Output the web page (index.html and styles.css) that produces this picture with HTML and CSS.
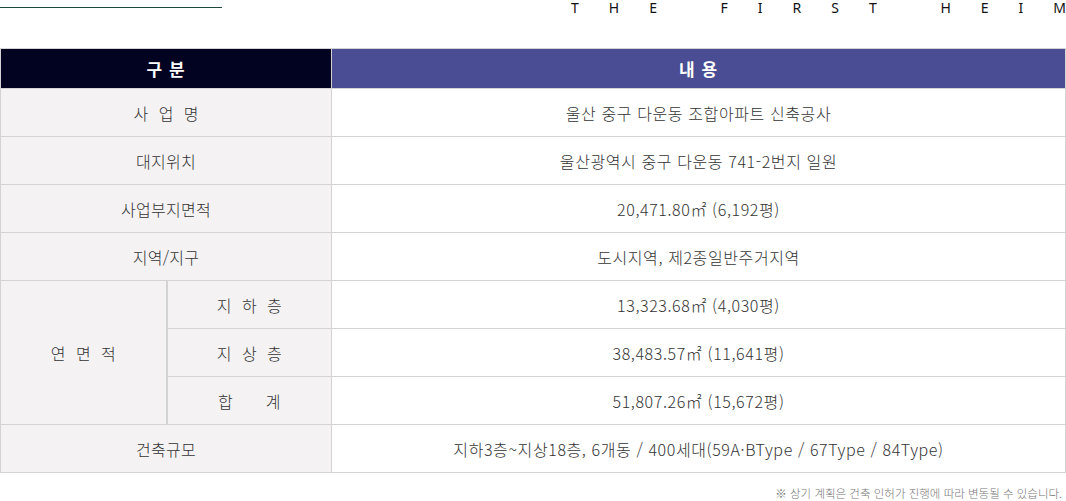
FILE: index.html
```html
<!DOCTYPE html>
<html lang="ko">
<head>
<meta charset="utf-8">
<title>The First Heim</title>
<link rel="stylesheet" href="styles.css">
</head>
<body>
<div class="top">
  <div class="rule"></div>
  <div class="brand">THE FIRST HEI<span class="last">M</span></div>
</div>
<table class="spec">
  <colgroup>
    <col class="c1"><col class="c2"><col class="c3">
  </colgroup>
  <thead>
    <tr>
      <th colspan="2" class="h-left">구 분</th>
      <th class="h-right">내 용</th>
    </tr>
  </thead>
  <tbody>
    <tr><td colspan="2" class="lab wide">사 업 명</td><td>울산 중구 다운동 조합아파트 신축공사</td></tr>
    <tr><td colspan="2" class="lab">대지위치</td><td>울산광역시 중구 다운동 741-2번지 일원</td></tr>
    <tr><td colspan="2" class="lab">사업부지면적</td><td>20,471.80㎡ (6,192평)</td></tr>
    <tr><td colspan="2" class="lab">지역/지구</td><td>도시지역, 제2종일반주거지역</td></tr>
    <tr><td rowspan="3" class="lab wide">연 면 적</td><td class="lab sub wide">지 하 층</td><td>13,323.68㎡ (4,030평)</td></tr>
    <tr><td class="lab sub wide">지 상 층</td><td>38,483.57㎡ (11,641평)</td></tr>
    <tr><td class="lab sub wide">합&nbsp;&nbsp;&nbsp;&nbsp;계</td><td>51,807.26㎡ (15,672평)</td></tr>
    <tr><td colspan="2" class="lab">건축규모</td><td>지하3층~지상18층, 6개동 / 400세대(59A·BType / 67Type / 84Type)</td></tr>
  </tbody>
</table>
<p class="note">※ 상기 계획은 건축 인허가 진행에 따라 변동될 수 있습니다.</p>
</body>
</html>
```
FILE: styles.css
```css
html, body {
  margin: 0;
  padding: 0;
  background: #ffffff;
}
body {
  width: 1066px;
  font-family: "Noto Sans CJK KR", "Noto Sans", sans-serif;
  color: #333333;
  overflow: hidden;
}
.top {
  display: flex;
  justify-content: space-between;
  align-items: flex-start;
  height: 48px;
}
.rule {
  width: 222px;
  height: 1px;
  margin-top: 7px;
  background: #1f4a3c;
}
.brand {
  font-family: "Noto Sans", sans-serif;
  font-size: 14px;
  line-height: 15px;
  letter-spacing: 30px;
  color: #111111;
  white-space: pre;
}
.brand .last {
  letter-spacing: 0;
}
.spec {
  width: 1066px;
  border-collapse: collapse;
  table-layout: fixed;
  border: 1px solid #d3d3d3;
}
.c1 { width: 166px; }
.c2 { width: 165px; }
.spec th {
  height: 39px;
  padding: 0;
  color: #ffffff;
  font-size: 17px;
  font-weight: 700;
  letter-spacing: 1px;
  border: 1px solid #d3d3d3;
}
.h-left { background: #020321; }
.h-right { background: #4a4d93; }
.spec td {
  height: 47px;
  padding: 0;
  text-align: center;
  font-size: 16px;
  font-weight: 300;
  letter-spacing: 0.6px;
  border: 1px solid #d3d3d3;
  background: #ffffff;
}
.spec td.lab {
  background: #f4f2f3;
  letter-spacing: 0.3px;
}
.spec td.wide {
  letter-spacing: 3px;
  text-indent: 3px;
}
.spec td.sub {
  border-left: 2px solid #d3d3d3;
}
.note {
  margin: 12px 4px 0 0;
  text-align: right;
  font-size: 11.5px;
  font-weight: 300;
  color: #777777;
}
```
